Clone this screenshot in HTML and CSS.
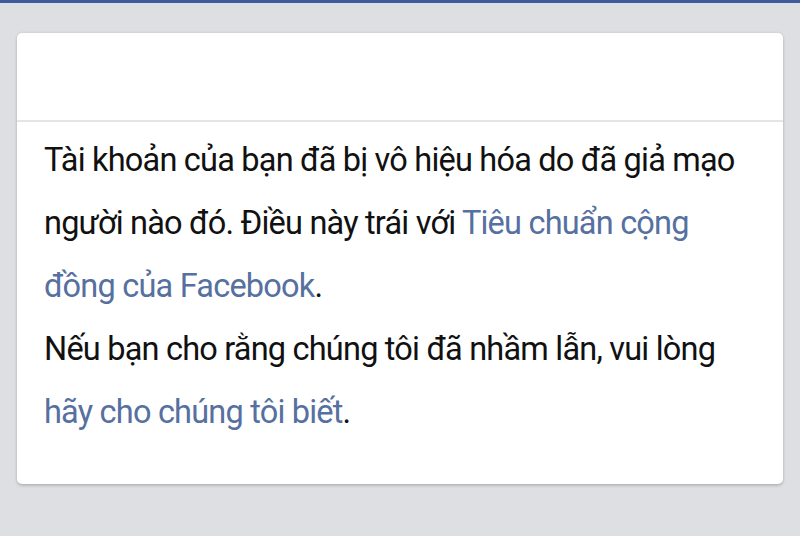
FILE: index.html
```html
<!DOCTYPE html>
<html lang="vi">
<head>
  <meta charset="UTF-8">
  <meta name="viewport" content="width=device-width, initial-scale=1.0">
  <title>Tài khoản bị vô hiệu hóa</title>
  <link rel="stylesheet" href="styles.css">
</head>
<body>
  <div class="topbar"></div>

  <div class="page">
    <div class="card">
      <div class="card-header"></div>
      <div class="card-body">
        <p>Tài khoản của bạn đã bị vô hiệu hóa do đã giả mạo người nào đó. Điều này trái với <a href="#">Tiêu chuẩn cộng đồng của Facebook</a>.</p>
        <p>Nếu bạn cho rằng chúng tôi đã nhầm lẫn, vui lòng <a href="#">hãy cho chúng tôi biết</a>.</p>
      </div>
    </div>
  </div>
</body>
</html>
```

FILE: styles.css
```css
body {
  font-family: Roboto, 'Liberation Sans', sans-serif;
  margin: 0;
  padding: 0;
  background-color: #dddfe2;
  min-height: 100vh;
}
.topbar {
  height: 3px;
  background-color: #3f5b9b;
}
.page {
  padding: 30px 17px 0;
}
.card {
  background-color: #fff;
  border-radius: 5px;
  box-shadow: 0 0 3px rgba(0,0,0,0.12), 0 2px 3px rgba(0,0,0,0.14);
  overflow: hidden;
}
.card-header {
  height: 87px;
  border-bottom: 2px solid #e4e5e8;
}
.card-body {
  padding: 7px 30px 40px 27px;
  font-size: 32.5px;
  letter-spacing: -0.8px;
  line-height: 63px;
  color: #111;
}
.card-body p {
  margin: 0;
}
.card-body a {
  color: #56709f;
  text-decoration: none;
}
```
